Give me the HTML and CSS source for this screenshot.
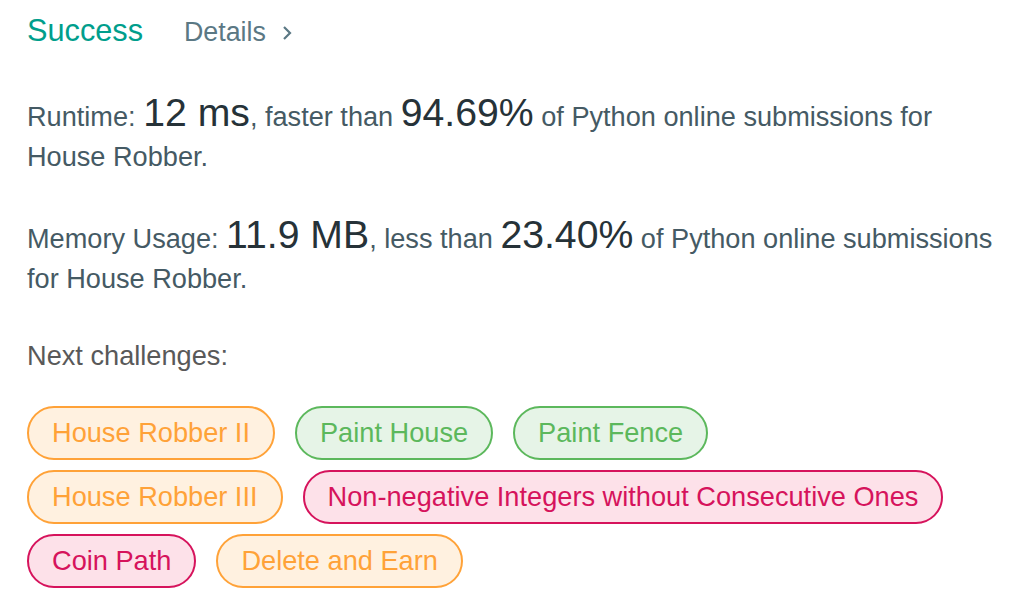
FILE: index.html
```html
<!DOCTYPE html>
<html>
<head>
<meta charset="utf-8">
<link rel="stylesheet" href="styles.css">
</head>
<body>
<div class="page">
  <div class="header">
    <span class="status">Success</span>
    <a class="details">Details
      <svg class="chev" width="10" height="16" viewBox="0 0 10 16"><path d="M2 2 L8 8 L2 14" fill="none" stroke="#5b7884" stroke-width="2.2"/></svg>
    </a>
  </div>
  <p class="stat">Runtime: <span class="big">12 ms</span>, faster than <span class="big">94.69%</span> of Python online submissions for House Robber.</p>
  <p class="stat">Memory Usage: <span class="big">11.9 MB</span>, less than <span class="big">23.40%</span> of Python online submissions for House Robber.</p>
  <div class="next">Next challenges:</div>
  <div class="tags">
    <span class="tag medium">House Robber II</span>
    <span class="tag easy">Paint House</span>
    <span class="tag easy">Paint Fence</span>
    <span class="tag medium">House Robber III</span>
    <span class="tag hard">Non-negative Integers without Consecutive Ones</span>
    <span class="tag hard">Coin Path</span>
    <span class="tag medium">Delete and Earn</span>
  </div>
</div>
</body>
</html>
```
FILE: styles.css
```css
html, body {
  margin: 0;
  padding: 0;
  background: #ffffff;
}
.page {
  font-family: "Liberation Sans", Arial, sans-serif;
  padding: 11px 0 0 27px;
}
.header {
  display: flex;
  align-items: baseline;
  height: 40px;
  line-height: 40px;
}
.status {
  font-size: 30.7px;
  color: #009e8c;
  margin-right: 41px;
}
.details {
  font-size: 26.8px;
  color: #5b7884;
  display: flex;
  align-items: baseline;
}
.chev {
  margin-left: 16px;
  align-self: center;
  position: relative;
  top: 1px;
}
.stat {
  margin: 42px 0 0 0;
  font-size: 27.15px;
  line-height: 40px;
  color: #455a64;
}
.stat + .stat {
  margin-top: 38px;
}
.big {
  font-size: 39.2px;
  color: #263238;
}
.next {
  margin-top: 37px;
  font-size: 27.2px;
  line-height: 40px;
  color: #595959;
}
.tags {
  margin-top: 30px;
  display: flex;
  flex-wrap: wrap;
  column-gap: 20px;
  row-gap: 10px;
  padding-right: 50px;
}
.tag {
  font-size: 27.2px;
  line-height: 40px;
  padding: 5px 23px;
  border: 2px solid;
  border-radius: 27px;
}
.medium {
  color: #ffa238;
  border-color: #ffa238;
  background: #fff1e0;
}
.easy {
  color: #5cb85c;
  border-color: #5cb85c;
  background: #e6f4e7;
}
.hard {
  color: #d6135c;
  border-color: #d6135c;
  background: #fde1e9;
}
```
